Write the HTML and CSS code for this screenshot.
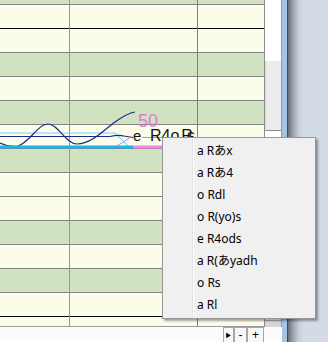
FILE: index.html
```html
<!DOCTYPE html>
<html lang="ja">
<head>
    <meta charset="UTF-8">
    <title>Score view</title>
    <link rel="stylesheet" href="styles.css">
</head>
<body>
    <div class="window">
        <div class="view">
            <div class="pane">
                <div class="sheet">
                    <div class="row green first"></div>
                    <div class="row dark"></div>
                    <div class="row"></div>
                    <div class="row green"></div>
                    <div class="row"></div>
                    <div class="row green"></div>
                    <div class="row"></div>
                    <div class="row green"></div>
                    <div class="row"></div>
                    <div class="row"></div>
                    <div class="row green"></div>
                    <div class="row"></div>
                    <div class="row green"></div>
                    <div class="row dark"></div>
                    <div class="row last"></div>

                    <div class="vline teal"></div>
                    <div class="vline red"></div>

                    <!-- 曲線とラベル -->
                    <svg class="plot" width="264" height="326" viewBox="0 0 264 326">
                        <line x1="0" y1="133" x2="115" y2="133" stroke="#6fd6ea" stroke-width="1"/>
                        <line x1="115" y1="133" x2="128" y2="146" stroke="#4cc4e4" stroke-width="1"/>
                        <path d="M0 136.5 H110 C116 135 120 135 124 136 L133 137.5" fill="none" stroke="#1a2a8c" stroke-width="1.2"/>
                        <path d="M0 143 C6 146 12 147 18 146 C30 142 38 124 48 124 C58 124 66 144 77 144 C92 144 105 129 115 122 C122 117 128 113 135 112" fill="none" stroke="#1a2a8c" stroke-width="1.2"/>
                        <line x1="117" y1="146" x2="131" y2="137" stroke="#e27ad6" stroke-width="1"/>
                        <line x1="142" y1="137.5" x2="162" y2="137.5" stroke="#e27ad6" stroke-width="1"/>
                        <rect x="0" y="145.5" width="133" height="3" fill="#1fb4e6"/>
                        <rect x="133" y="145.5" width="31" height="3" fill="#ef86e4"/>
                        <text class="num" x="138" y="127">50</text>
                        <text class="tag small" x="133" y="141">e</text>
                        <text class="tag" x="150" y="140.5">R4o<tspan dx="2">R</tspan><tspan dx="-6">s</tspan></text>
                    </svg>
                </div>
                <div class="vscroll">
                    <div class="track"></div>
                    <div class="thumb"></div>
                    <div class="track rest"></div>
                    <div class="foot"></div>
                </div>
            </div>
            <div class="hbar">
                <button class="tool play">&#9654;</button>
                <button class="tool minus">-</button>
                <button class="tool plus">+</button>
            </div>
        </div>
        <div class="frame">
            <div class="stripe"></div>
            <div class="edge"></div>
            <div class="desk"></div>
        </div>

        <ul class="menu">
            <li>a Rあx</li>
            <li>a Rあ4</li>
            <li>o Rdl</li>
            <li>o R(yo)s</li>
            <li>e R4ods</li>
            <li>a R(あyadh</li>
            <li>o Rs</li>
            <li>a Rl</li>
        </ul>
    </div>
</body>
</html>
```

FILE: styles.css
```css
* {
    margin: 0;
    padding: 0;
    box-sizing: border-box;
}

body {
    width: 328px;
    height: 342px;
    overflow: hidden;
    font-family: 'Liberation Sans', Arial, sans-serif;
    background-color: #d3dbe7;
}

.window {
    position: relative;
    display: flex;
    width: 328px;
    height: 342px;
}

.view {
    display: flex;
    flex-direction: column;
    width: 282px;
    background-color: #fcfcfc;
}

.pane {
    display: flex;
    height: 327px;
}

.sheet {
    position: relative;
    width: 265px;
    border-right: 1px solid #8c8c8c;
    display: flex;
    flex-direction: column;
    overflow: hidden;
}

.row {
    height: 24px;
    background-color: #fbfdea;
    border-bottom: 1px solid #828282;
}

.row.green {
    background-color: #d1e2c0;
}

.row.dark {
    border-bottom-color: #000;
}

.row.first {
    height: 5px;
}

.row.last {
    height: 10px;
    border-bottom-color: #9a9a9a;
}

.vline {
    position: absolute;
    top: 0;
    width: 1px;
    height: 326px;
}

.vline.teal {
    left: 69px;
    background-color: #3cc493;
}

.vline.red {
    left: 197px;
    background-color: #c8605c;
}

.plot {
    position: absolute;
    left: 0;
    top: 0;
}

.plot .num {
    font-family: 'Liberation Sans', Arial, sans-serif;
    font-size: 18px;
    fill: #e07ad8;
}

.plot .tag {
    font-family: 'Liberation Sans', Arial, sans-serif;
    font-size: 16px;
    fill: #111;
}

.plot .tag.small {
    font-size: 15px;
}

.vscroll {
    display: flex;
    flex-direction: column;
    width: 17px;
    border-right: 1px solid #9a9a9a;
    background-color: #fff;
}

.track {
    height: 61px;
    background-color: #fff;
}

.thumb {
    height: 70px;
    background-color: #ececec;
    border-left: 1px solid #dcdcdc;
    border-bottom: 1px solid #8a8a8a;
}

.track.rest {
    flex: 1;
}

.foot {
    height: 7px;
    background-color: #d6d6d6;
    border-top: 1px solid #b0b0b0;
}

.hbar {
    display: flex;
    align-items: flex-start;
    height: 15px;
    padding-left: 223px;
    background-color: #fcfcfc;
}

.tool {
    height: 15px;
    border: 1px solid #a8a8a8;
    border-bottom: none;
    background-color: #f8f8f8;
    color: #000;
    font-family: 'Liberation Sans', Arial, sans-serif;
    font-size: 12px;
    line-height: 13px;
    text-align: center;
}

.tool.play {
    width: 11px;
    font-size: 7px;
}

.tool.minus {
    width: 13px;
}

.tool.plus {
    width: 17px;
}

.frame {
    flex: 1;
    display: flex;
}

.stripe {
    width: 5px;
    background-color: #a6c3e6;
}

.edge {
    width: 1px;
    background-color: #3e4a5e;
}

.desk {
    flex: 1;
    background: linear-gradient(to right, #666e7c 0, #9aa3b0 5px, #c8d0dc 11px, #d3dbe7 16px);
}

.menu {
    position: absolute;
    left: 162px;
    top: 137px;
    width: 154px;
    height: 182px;
    padding: 2px;
    list-style: none;
    border: 1px solid #979797;
    background-color: #f0f0f0;
    background-image: linear-gradient(to right, transparent 29px, #e2e3e3 29px, #e2e3e3 30px, #fff 30px, #fff 31px, transparent 31px);
    box-shadow: 2px 2px 2px rgba(0, 0, 0, 0.35);
    font-family: 'Noto Sans', 'Noto Sans CJK JP', sans-serif;
    font-size: 12px;
    color: #000;
}

.menu li {
    height: 22px;
    line-height: 22px;
    padding-left: 32px;
    white-space: nowrap;
}
```
